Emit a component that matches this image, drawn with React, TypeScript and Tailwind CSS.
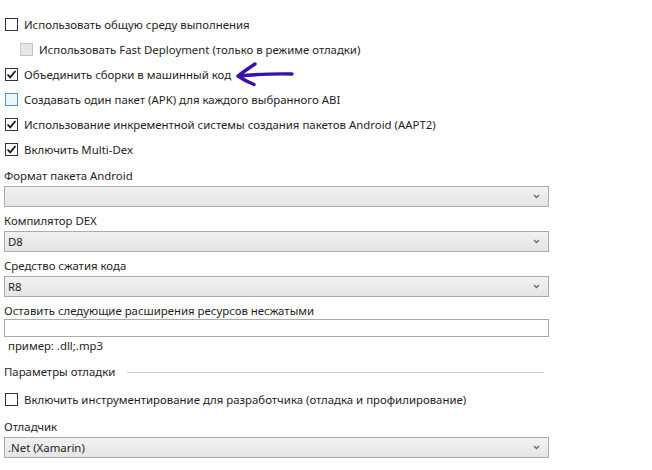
import React from 'react';

type BoxState = 'off' | 'on' | 'disabled' | 'hover';

const CheckBox: React.FC<{ state: BoxState }> = ({ state }) => {
  const cls =
    state === 'disabled'
      ? 'border-[#c4c4c4] bg-[#e6e6e6]'
      : state === 'hover'
        ? 'border-[#4f95dc] bg-[#eef6fe]'
        : 'border-[#333333] bg-white';
  return (
    <span className={`w-[13px] h-[13px] border flex items-center justify-center shrink-0 ${cls}`}>
      {state === 'on' && (
        <svg width="11" height="11" viewBox="0 0 11 11">
          <path d="M1.5 5.5 L4.2 8.3 L9.5 2" fill="none" stroke="#1a1a1a" strokeWidth="1.8" />
        </svg>
      )}
    </span>
  );
};

const CheckRow: React.FC<{ state: BoxState; label: string; indent?: boolean; children?: React.ReactNode }> = ({
  state,
  label,
  indent,
  children,
}) => (
  <div className={`h-[25px] flex items-center ${indent ? 'pl-[16px]' : 'pl-[1px]'}`}>
    <CheckBox state={state} />
    <span className="ml-[6px] whitespace-nowrap">{label}</span>
    {children}
  </div>
);

const Chevron = () => (
  <svg width="7" height="5" viewBox="0 0 7 5" className="shrink-0">
    <path d="M1 1 L3.5 3.5 L6 1" fill="none" stroke="#6a6a6a" strokeWidth="1.3" />
  </svg>
);

const Select: React.FC<{ value?: string }> = ({ value }) => (
  <div className="mt-[2px] mb-[6px] w-[545px] h-[21px] border border-[#acacac] bg-gradient-to-b from-[#f2f2f2] to-[#e5e5e5] flex items-center justify-between pl-[3px] pr-[8px]">
    <span>{value ?? ''}</span>
    <Chevron />
  </div>
);

const Label: React.FC<{ children: React.ReactNode }> = ({ children }) => (
  <div className="h-[16px] leading-[16px] whitespace-nowrap">{children}</div>
);

const Arrow = () => (
  <svg width="62" height="26" viewBox="0 0 62 26" className="ml-[3px] shrink-0">
    <path
      d="M58 12 C44 11.5, 22 12.5, 4 14 M21 2 C15 6, 9 10, 4 14 C9 17.5, 14 20, 20 22.5"
      fill="none"
      stroke="#3b10a6"
      strokeWidth="3.4"
      strokeLinecap="round"
      strokeLinejoin="round"
    />
  </svg>
);

export default function App() {
  return (
    <div
      className="w-[652px] h-[470px] overflow-hidden bg-white text-[#1e1e1e] text-[11.4px] px-[4px] pt-[12px]"
      style={{ fontFamily: '"Noto Sans", "Open Sans", sans-serif' }}
    >
      <CheckRow state="off" label="Использовать общую среду выполнения" />
      <CheckRow state="disabled" label="Использовать Fast Deployment (только в режиме отладки)" indent />
      <CheckRow state="on" label="Объединить сборки в машинный код">
        <Arrow />
      </CheckRow>
      <CheckRow state="hover" label="Создавать один пакет (APK) для каждого выбранного ABI" />
      <CheckRow state="on" label="Использование инкрементной системы создания пакетов Android (AAPT2)" />
      <CheckRow state="on" label="Включить Multi-Dex" />

      <div className="mt-[6px]">
        <Label>Формат пакета Android</Label>
        <Select />
        <Label>Компилятор DEX</Label>
        <Select value="D8" />
        <Label>Средство сжатия кода</Label>
        <Select value="R8" />
        <Label>Оставить следующие расширения ресурсов несжатыми</Label>
        <div className="w-[545px] h-[18px] border border-[#acacac] bg-white" />
        <div className="h-[16px] leading-[16px] pl-[4px] mt-[1px]">пример: .dll;.mp3</div>
      </div>

      <div className="mt-[10px] w-[540px] flex items-center h-[16px]">
        <span className="whitespace-nowrap">Параметры отладки</span>
        <div className="ml-[12px] flex-1 h-px bg-[#c8c8c8]" />
      </div>

      <div className="mt-[7px]">
        <CheckRow state="off" label="Включить инструментирование для разработчика (отладка и профилирование)" />
      </div>

      <div className="mt-[7px]">
        <Label>Отладчик</Label>
        <Select value=".Net (Xamarin)" />
      </div>
    </div>
  );
}
